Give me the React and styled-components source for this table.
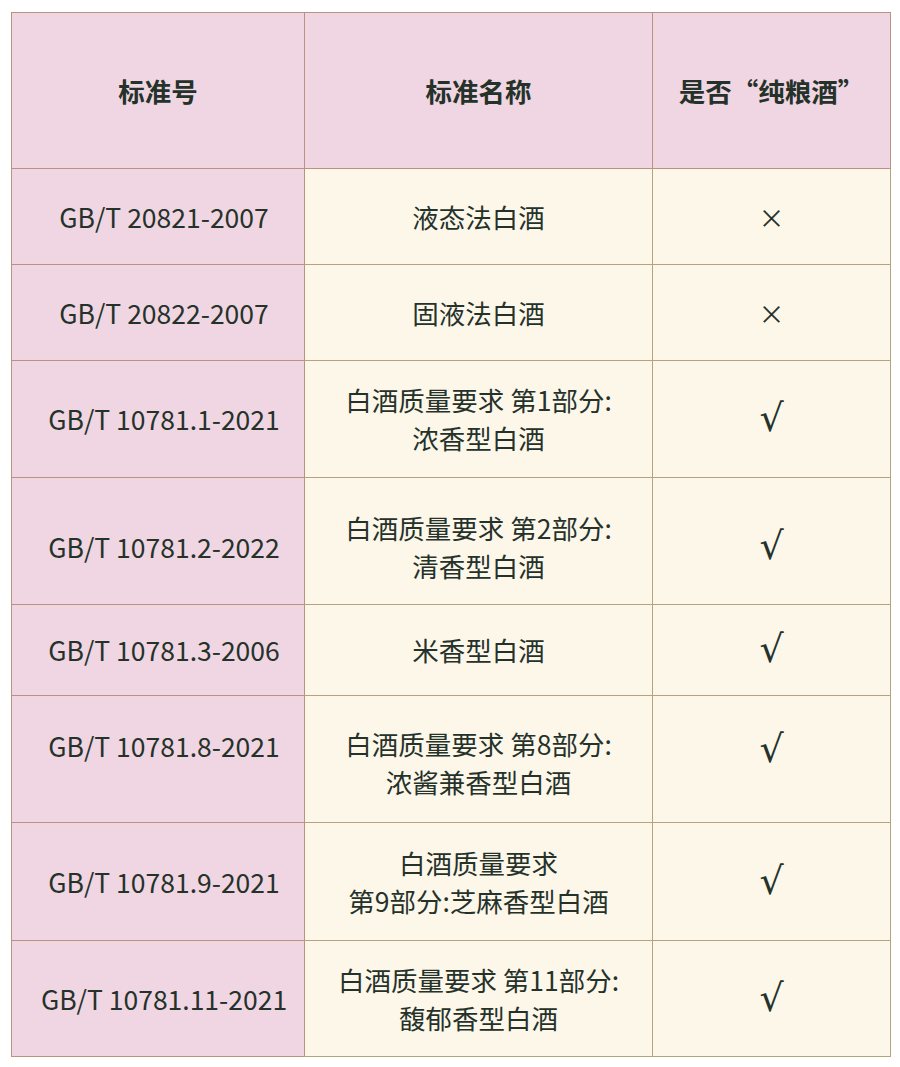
import React from "react";
import styled, { createGlobalStyle } from "styled-components";

const Global = createGlobalStyle`
  html, body { margin: 0; padding: 0; background: #ffffff; }
  body { font-family: "Noto Sans CJK SC", "Noto Sans", sans-serif; }
`;

const Page = styled.div`
  width: 900px;
  height: 1067px;
  padding: 12px 0 0 11px;
  box-sizing: border-box;
`;

const Table = styled.table`
  border-collapse: collapse;
  table-layout: fixed;
  width: 879px;
  color: #25322a;
  font-size: 26.5px;
  line-height: 38px;
`;

const Col = styled.col`
  width: ${(p) => p.$w}px;
`;

const Row = styled.tr`
  height: ${(p) => p.$h}px;
`;

const Cell = styled.td`
  border: 1px solid ${(p) => (p.$pink ? "#b8937f" : "#b3a47e")};
  background: ${(p) => (p.$pink ? "#f0d6e3" : "#fdf7ea")};
  text-align: center;
  vertical-align: middle;
  padding-left: ${(p) => (p.$first ? 12 : 0)}px;
  padding-right: 0;
  padding-top: ${(p) => Math.max(0, (p.$dy || 0) * 2)}px;
  padding-bottom: ${(p) => Math.max(0, -(p.$dy || 0) * 2)}px;
  font-weight: ${(p) => (p.$head ? 700 : 400)};
  white-space: pre-line;
  box-sizing: border-box;
`;

const Mark = styled.span`
  display: inline-block;
  font-family: ${(p) =>
    p.$check ? '"DejaVu Sans", sans-serif' : '"Noto Sans CJK SC", sans-serif'};
  font-size: ${(p) => (p.$check ? "38px" : "26px")};
  line-height: 1;
`;

// [code, name, check, height, [dy col1, dy col2, dy col3]]
const rows = [
  ["GB/T 20821-2007", "液态法白酒", false, 96, [0, 0, 0]],
  ["GB/T 20822-2007", "固液法白酒", false, 96, [0, 0, 0]],
  ["GB/T 10781.1-2021", "白酒质量要求 第1部分:\n浓香型白酒", true, 117, [0, 0, 0]],
  ["GB/T 10781.2-2022", "白酒质量要求 第2部分:\n清香型白酒", true, 127, [6, 6, 6]],
  ["GB/T 10781.3-2006", "米香型白酒", true, 91, [0, 0, 0]],
  ["GB/T 10781.8-2021", "白酒质量要求 第8部分:\n浓酱兼香型白酒", true, 127, [-13, 4, -9]],
  ["GB/T 10781.9-2021", "白酒质量要求\n第9部分:芝麻香型白酒", true, 118, [0, 0, 0]],
  ["GB/T 10781.11-2021", "白酒质量要求 第11部分:\n馥郁香型白酒", true, 116, [0, 0, 0]],
];

export default function App() {
  return (
    <Page>
      <Global />
      <Table>
        <colgroup>
          <Col $w={293} />
          <Col $w={348} />
          <Col $w={238} />
        </colgroup>
        <tbody>
          <Row $h={156}>
            <Cell $pink $head>标准号</Cell>
            <Cell $pink $head>标准名称</Cell>
            <Cell $pink $head>是否“纯粮酒”</Cell>
          </Row>
          {rows.map(([code, name, ok, h, dy]) => (
            <Row key={code} $h={h}>
              <Cell $pink $first $dy={dy[0]}>{code}</Cell>
              <Cell $dy={dy[1]}>{name}</Cell>
              <Cell $dy={dy[2]}>
                <Mark $check={ok}>{ok ? "√" : "×"}</Mark>
              </Cell>
            </Row>
          ))}
        </tbody>
      </Table>
    </Page>
  );
}
